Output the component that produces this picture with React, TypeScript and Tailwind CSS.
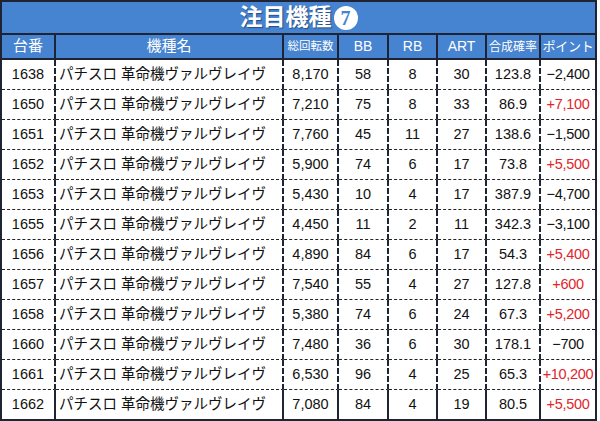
import React from 'react'

interface Row {
  no: number
  name: string
  games: string
  bb: number
  rb: number
  art: number
  rate: string
  point: string
}

const NAME = 'パチスロ 革命機ヴァルヴレイヴ'

const rows: Row[] = [
  { no: 1638, name: NAME, games: '8,170', bb: 58, rb: 8, art: 30, rate: '123.8', point: '−2,400' },
  { no: 1650, name: NAME, games: '7,210', bb: 75, rb: 8, art: 33, rate: '86.9', point: '+7,100' },
  { no: 1651, name: NAME, games: '7,760', bb: 45, rb: 11, art: 27, rate: '138.6', point: '−1,500' },
  { no: 1652, name: NAME, games: '5,900', bb: 74, rb: 6, art: 17, rate: '73.8', point: '+5,500' },
  { no: 1653, name: NAME, games: '5,430', bb: 10, rb: 4, art: 17, rate: '387.9', point: '−4,700' },
  { no: 1655, name: NAME, games: '4,450', bb: 11, rb: 2, art: 11, rate: '342.3', point: '−3,100' },
  { no: 1656, name: NAME, games: '4,890', bb: 84, rb: 6, art: 17, rate: '54.3', point: '+5,400' },
  { no: 1657, name: NAME, games: '7,540', bb: 55, rb: 4, art: 27, rate: '127.8', point: '+600' },
  { no: 1658, name: NAME, games: '5,380', bb: 74, rb: 6, art: 24, rate: '67.3', point: '+5,200' },
  { no: 1660, name: NAME, games: '7,480', bb: 36, rb: 6, art: 30, rate: '178.1', point: '−700' },
  { no: 1661, name: NAME, games: '6,530', bb: 96, rb: 4, art: 25, rate: '65.3', point: '+10,200' },
  { no: 1662, name: NAME, games: '7,080', bb: 84, rb: 4, art: 19, rate: '80.5', point: '+5,500' },
]

const GRID = 'grid grid-cols-[54px_228px_55px_50px_49px_49px_54px_54px]'

export default function App() {
  return (
    <div className="w-[600px] h-[421px] bg-white">
      <div
        className="w-[597px] h-[421px] border-2 border-[#1e2433] flex flex-col"
        style={{ fontFamily: '"Liberation Sans", "Noto Sans CJK JP", sans-serif' }}
      >
        {/* title */}
        <div className="h-[33px] bg-[#4683d0] border-b-2 border-[#1e2433] flex items-center justify-center">
          <span className="text-white font-bold text-[23px] leading-none [text-shadow:1px_1px_1px_rgba(20,40,80,0.6)]">
            注目機種
          </span>
          <span
            className="ml-[2px] w-[24px] h-[24px] rounded-full bg-white text-[#4683d0] font-bold text-[20px] leading-none flex items-center justify-center"
            style={{ fontFamily: '"Liberation Serif", serif' }}
          >
            7
          </span>
        </div>

        {/* header */}
        <div className={`${GRID} h-[25px] bg-[#4683d0] border-b-2 border-[#1e2433] text-white`}>
          <div className="border-r-2 border-[#1e2433] flex items-center justify-center text-[15px]">台番</div>
          <div className="border-r-2 border-[#1e2433] flex items-center justify-center text-[15px]">機種名</div>
          <div className="border-r-2 border-[#1e2433] flex items-center justify-center text-[11.5px]">総回転数</div>
          <div className="border-r-2 border-[#1e2433] flex items-center justify-center text-[14px]">BB</div>
          <div className="border-r-2 border-[#1e2433] flex items-center justify-center text-[14px]">RB</div>
          <div className="border-r-2 border-[#1e2433] flex items-center justify-center text-[14px]">ART</div>
          <div className="border-r-2 border-[#1e2433] flex items-center justify-center text-[12px]">合成確率</div>
          <div className="flex items-center justify-center text-[13px] tracking-[-0.3px]">ポイント</div>
        </div>

        {/* rows */}
        {rows.map((r, i) => {
          const last = i === rows.length - 1
          const cell = `border-r-2 border-r-[#1e2433] ${last ? '' : 'border-b border-b-[#222] border-dashed'} flex items-center`
          const plus = r.point.startsWith('+')
          return (
            <div key={r.no} className={`${GRID} ${last ? 'h-[29px]' : 'h-[30px]'} text-[14.5px] text-[#111]`}>
              <div className={`${cell} justify-center`}>{r.no}</div>
              <div className={`${cell} pl-[3px] whitespace-nowrap`}>{r.name}</div>
              <div className={`${cell} justify-center`}>{r.games}</div>
              <div className={`${cell} justify-center`}>{r.bb}</div>
              <div className={`${cell} justify-center`}>{r.rb}</div>
              <div className={`${cell} justify-center`}>{r.art}</div>
              <div className={`${cell} justify-center`}>{r.rate}</div>
              <div
                className={`${last ? '' : 'border-b border-b-[#222] border-dashed'} flex items-center justify-center whitespace-nowrap tracking-[-0.3px] ${plus ? 'text-[#e0262b]' : ''}`}
              >
                {r.point}
              </div>
            </div>
          )
        })}
      </div>
    </div>
  )
}
